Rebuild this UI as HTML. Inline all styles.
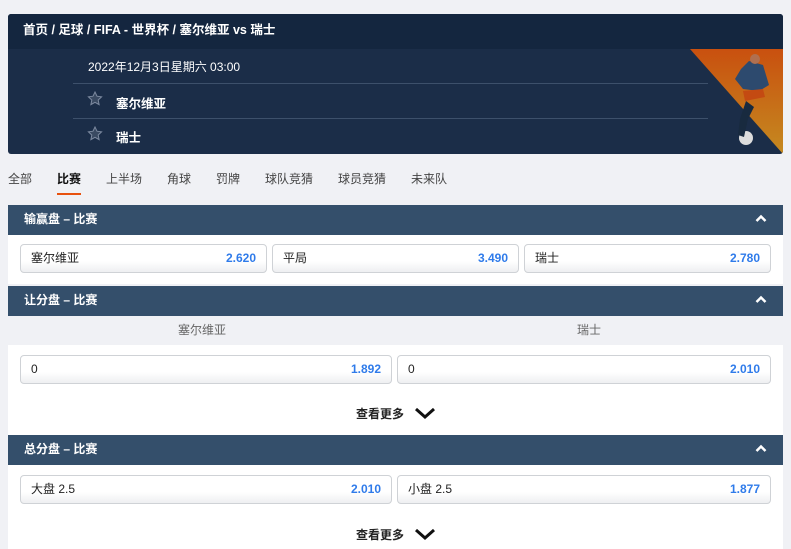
<!DOCTYPE html>
<html><head><meta charset="utf-8"><style>
*{margin:0;padding:0;box-sizing:border-box}
body{width:791px;height:549px;overflow:hidden;background:#f0f1f5;font-family:"Liberation Sans","Noto Sans CJK SC",sans-serif;position:relative;font-size:12px}
.a{position:absolute}
.hdr{left:8px;width:775px;height:30px;background:#344f6b;color:#fff;font-weight:bold;font-size:12px;line-height:28px;padding-left:16px}
.hdr svg{position:absolute;right:16px;top:9px}
.wb{left:8px;width:775px;background:#fff}
.btn{position:absolute;height:29px;border:1px solid #cfd2d6;border-radius:4px;background:linear-gradient(#fff 60%,#eeeff1);font-size:12px;line-height:27px;padding:0 10px;color:#222}
.btn b{position:absolute;right:10px;color:#2f7bea;font-weight:bold}
.more{font-size:12px;font-weight:bold;color:#222}
.tab{top:170px;font-size:12px;color:#444}
</style></head><body>
<div class="a" style="left:8px;top:14px;width:775px;height:140px;border-radius:3px;overflow:hidden;background:#1b2d48">
 <div class="a" style="left:0;top:0;width:775px;height:35px;background:#14263f;color:#fff;font-weight:bold;font-size:12.5px;line-height:33px;padding-left:15px">首页 / 足球 / FIFA - 世界杯 / 塞尔维亚 vs 瑞士</div>
 <svg class="a" style="left:0;top:35px" width="775" height="105"><defs><linearGradient id="g" x1="0" y1="0" x2="0" y2="1"><stop offset="0" stop-color="#c9500f"/><stop offset="1" stop-color="#c58a20"/></linearGradient></defs>
 <polygon points="682,0 775,0 775,105" fill="url(#g)"/>
 <line x1="65" y1="34.5" x2="700" y2="34.5" stroke="#3d506b"/><line x1="65" y1="69.5" x2="700" y2="69.5" stroke="#3d506b"/>
 <circle cx="738" cy="89" r="7" fill="#ddd"/>
 <path d="M733 20 l8 -8 l14 4 l6 20 l-10 6 l-16 -2 l-8 -10z" fill="#2d4a6e"/>
 <path d="M735 42 l20 -2 l2 8 l-20 4z" fill="#c44a12"/>
 <circle cx="747" cy="10" r="5" fill="#b07050"/>
 <path d="M738 52 l-6 18 l-2 16 l6 2 l4 -18 l6 -12z" fill="#182a3f"/>
 <path d="M87 43 l2 4.2 4.6 .6 -3.4 3.2 .9 4.6 -4.1 -2.3 -4.1 2.3 .9 -4.6 -3.4 -3.2 4.6 -.6z" fill="#3a4a62" stroke="#7d8aa0" stroke-width="1"/>
 <path d="M87 78 l2 4.2 4.6 .6 -3.4 3.2 .9 4.6 -4.1 -2.3 -4.1 2.3 .9 -4.6 -3.4 -3.2 4.6 -.6z" fill="#3a4a62" stroke="#7d8aa0" stroke-width="1"/>
 </svg>
 <div class="a" style="left:80px;top:44px;color:#fff;font-size:12px">2022年12月3日星期六 03:00</div>
 <div class="a" style="left:108px;top:79px;color:#fff;font-weight:bold;font-size:12.5px">塞尔维亚</div>
 <div class="a" style="left:108px;top:113px;color:#fff;font-weight:bold;font-size:12.5px">瑞士</div>
</div>
<div class="a tab" style="left:8px">全部</div>
<div class="a tab" style="left:57px;color:#111;font-weight:bold">比赛</div>
<div class="a" style="left:57px;top:193px;width:24px;height:2px;background:#e8520f"></div>
<div class="a tab" style="left:106px">上半场</div>
<div class="a tab" style="left:167px">角球</div>
<div class="a tab" style="left:216px">罚牌</div>
<div class="a tab" style="left:265px">球队竞猜</div>
<div class="a tab" style="left:338px">球员竞猜</div>
<div class="a tab" style="left:411px">未来队</div>

<div class="a hdr" style="top:205px">输赢盘 – 比赛<svg width="12" height="9"><path d="M1.5 7 L6 2.5 L10.5 7" stroke="#fff" stroke-width="2.5" fill="none"/></svg></div>
<div class="a wb" style="top:235px;height:49px">
 <div class="btn" style="left:12px;top:9px;width:247px">塞尔维亚<b>2.620</b></div>
 <div class="btn" style="left:264px;top:9px;width:247px">平局<b>3.490</b></div>
 <div class="btn" style="left:516px;top:9px;width:247px">瑞士<b>2.780</b></div>
</div>
<div class="a hdr" style="top:286px">让分盘 – 比赛<svg width="12" height="9"><path d="M1.5 7 L6 2.5 L10.5 7" stroke="#fff" stroke-width="2.5" fill="none"/></svg></div>
<div class="a" style="left:178px;top:321px;color:#666">塞尔维亚</div>
<div class="a" style="left:577px;top:321px;color:#666">瑞士</div>
<div class="a wb" style="top:345px;height:90px">
 <div class="btn" style="left:12px;top:10px;width:372px">0<b>1.892</b></div>
 <div class="btn" style="left:389px;top:10px;width:374px">0<b>2.010</b></div>
 <div class="a more" style="left:348px;top:60px">查看更多</div>
 <svg class="a" style="left:406px;top:61px" width="22" height="14"><path d="M2 3 L11 11 L20 3" stroke="#111" stroke-width="3" fill="none"/></svg>
</div>
<div class="a hdr" style="top:435px">总分盘 – 比赛<svg width="12" height="9"><path d="M1.5 7 L6 2.5 L10.5 7" stroke="#fff" stroke-width="2.5" fill="none"/></svg></div>
<div class="a wb" style="top:465px;height:84px">
 <div class="btn" style="left:12px;top:10px;width:372px">大盘 2.5<b>2.010</b></div>
 <div class="btn" style="left:389px;top:10px;width:374px">小盘 2.5<b>1.877</b></div>
 <div class="a more" style="left:348px;top:61px">查看更多</div>
 <svg class="a" style="left:406px;top:62px" width="22" height="14"><path d="M2 3 L11 11 L20 3" stroke="#111" stroke-width="3" fill="none"/></svg>
</div>
</body></html>
